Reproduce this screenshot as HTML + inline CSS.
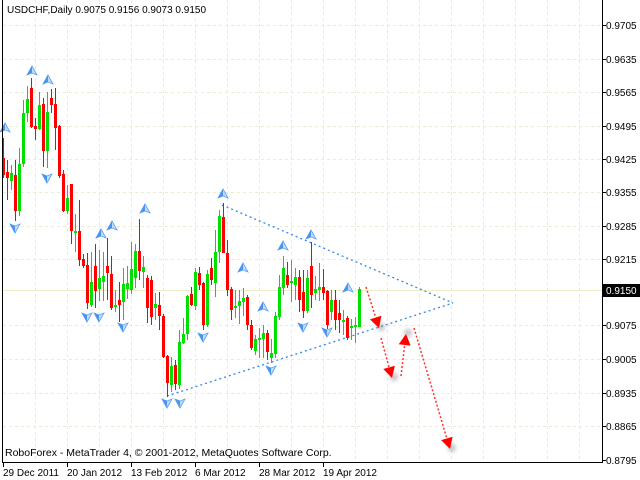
<!DOCTYPE html>
<html><head><meta charset="utf-8"><style>
html,body{margin:0;padding:0;background:#fff;}
svg{display:block;font-family:"Liberation Sans",sans-serif;}
</style></head><body>
<svg id="s" width="640" height="480" xmlns="http://www.w3.org/2000/svg">
<defs><filter id="bl" x="-1" y="-1" width="3" height="3"><feGaussianBlur stdDeviation="2"/></filter></defs>
<rect width="640" height="480" fill="#fff"/>
<g id="grid" stroke="#ebebcf" stroke-width="1" stroke-dasharray="3,3"></g>
<line x1="2" y1="290.5" x2="602" y2="290.5" stroke="#ededc8"/>
<g id="tl" stroke="#3388ee" stroke-width="1.3" stroke-dasharray="2,3" fill="none">
<line x1="222" y1="205" x2="453" y2="303"/>
<line x1="167" y1="396" x2="453" y2="303"/>
</g>
<g id="c"></g>
<g id="ar"></g>
<g id="red"></g>
<line x1="2.5" y1="0" x2="2.5" y2="463" stroke="#000"/>
<line x1="2" y1="462.5" x2="603" y2="462.5" stroke="#000"/>
<line x1="602.5" y1="0" x2="602.5" y2="463" stroke="#000"/>
<g id="ax" font-size="10" fill="#000"></g>
<rect x="603" y="284" width="37" height="13" fill="#000"/>
<text x="606" y="294" font-size="10" fill="#fff">0.9150</text>
<text x="7" y="13" font-size="10" fill="#000">USDCHF,Daily  0.9075 0.9156 0.9073 0.9150</text>
<text x="5" y="456" font-size="10.5" fill="#000">RoboForex - MetaTrader 4, © 2001-2012, MetaQuotes Software Corp.</text>
</svg>
<script>
var NS="http://www.w3.org/2000/svg";
function el(p,t,a,txt){var e=document.createElementNS(NS,t);for(var k in a)e.setAttribute(k,a[k]);if(txt)e.textContent=txt;document.getElementById(p).appendChild(e);return e;}
var ys=[25,59,92,126,159,192,226,259,325,359,393,426];
ys.forEach(function(y){el('grid','line',{x1:3,y1:y+.5,x2:602,y2:y+.5});});
for(var x=35;x<602;x+=32)el('grid','line',{x1:x+.5,y1:0,x2:x+.5,y2:462});
var pl=["0.9705","0.9635","0.9565","0.9495","0.9425","0.9355","0.9285","0.9215","0.9075","0.9005","0.8935","0.8865"];
ys.forEach(function(y,i){el('ax','text',{x:606,y:y+4},pl[i]);el('ax','line',{x1:602,y1:y+.5,x2:606,y2:y+.5,stroke:'#000'});});
el('ax','text',{x:606,y:464},"0.8795");el('ax','line',{x1:602,y1:460.5,x2:606,y2:460.5,stroke:'#000'});
var dl=[[3,"29 Dec 2011"],[67,"20 Jan 2012"],[131,"13 Feb 2012"],[195,"6 Mar 2012"],[259,"28 Mar 2012"],[323,"19 Apr 2012"]];
dl.forEach(function(d){el('ax','text',{x:d[0],y:476},d[1]);el('ax','line',{x1:d[0]+.5,y1:462,x2:d[0]+.5,y2:467,stroke:'#000'});});
var C=[[0,158,175,138,178],[0,172,178,160,200],[1,173,181,165,190],[0,175,211,160,221],[1,164,211,148,216],[1,113,164,100,167],[1,99,113,86,122],[0,88,127,78,128],[0,126,129,118,140],[1,105,129,92,130],[0,104,151,98,167],[1,112,151,92,168],[0,98,105,89,113],[0,104,128,88,150],[0,126,176,125,178],[0,174,211,170,212],[1,198,211,185,214],[0,184,231,184,244],[1,231,232,214,252],[0,231,260,200,266],[0,259,266,254,268],[0,265,303,253,309],[1,282,305,252,307],[0,266,291,244,308],[1,278,289,250,301],[1,276,282,252,301],[0,266,273,238,300],[0,274,308,256,310],[1,305,307,290,312],[0,300,305,282,322],[1,284,302,268,320],[1,283,289,266,299],[1,269,290,242,294],[1,251,278,244,288],[0,251,271,219,280],[1,267,272,256,288],[0,278,308,275,323],[0,280,317,276,325],[1,304,308,293,320],[0,305,316,292,330],[0,316,357,314,358],[0,356,383,355,397],[1,366,385,357,392],[0,365,384,360,390],[1,342,385,330,389],[1,334,343,318,344],[1,296,334,295,340],[0,294,305,287,306],[1,272,306,268,310],[0,273,285,267,290],[0,283,325,282,330],[1,274,325,270,327],[0,268,280,258,285],[1,252,283,230,297],[1,216,252,210,263],[0,217,253,203,253],[0,253,290,240,296],[0,289,310,287,320],[1,306,308,290,318],[1,301,306,290,324],[1,298,302,288,316],[0,297,325,295,330],[0,325,348,320,350],[1,339,351,335,355],[1,338,340,328,358],[1,333,339,325,358],[0,333,352,330,360],[1,353,358,339,363],[1,316,354,312,358],[1,287,317,275,320],[1,268,288,256,295],[0,275,285,262,288],[1,281,283,260,302],[1,277,285,268,300],[0,277,300,270,312],[0,292,311,270,318],[1,278,311,270,313],[0,266,295,242,308],[1,289,293,276,300],[1,287,290,263,301],[0,287,293,269,300],[0,291,325,290,329],[1,300,312,290,320],[0,300,320,290,330],[0,313,320,300,333],[1,320,322,310,335],[0,318,338,316,340],[1,326,328,319,340],[1,325,327,317,343],[1,289,327,287,327]];
C.forEach(function(c,i){var x=3+4*i;var col=c[0]?'#00e000':'#ff0000';
el('c','rect',{x:x,y:c[3],width:1,height:c[4]-c[3],fill:col});
el('c','rect',{x:x-1,y:c[1],width:3,height:Math.max(2,c[2]-c[1]),fill:col});});
var up=[[32,71],[48,80],[5,128],[101,234],[112,226],[145,209],[223,194],[243,268],[263,307],[283,246],[311,235],[348,288]];
var dn=[[15,228],[47,178],[87,317],[99,317],[123,327],[203,337],[271,370],[303,327],[327,332],[167,403],[180,403]];
function arr(x,y,s){el('ar','path',{d:"M"+x+" "+(y-5*s)+" L"+(x+5)+" "+(y+4*s)+" L"+x+" "+(y+2*s)+" L"+(x-5)+" "+(y+4*s)+"Z",fill:'#bfdcff',stroke:'#5aa0f0','stroke-width':0.8});
el('ar','path',{d:"M"+x+" "+(y-5*s)+" L"+x+" "+(y+2*s)+" L"+(x-5)+" "+(y+4*s)+"Z",fill:'#4a94f0'});}
up.forEach(function(p){arr(p[0],p[1],1);});
dn.forEach(function(p){arr(p[0],p[1],-1);});
function ra(x1,y1,x2,y2){var dx=x2-x1,dy=y2-y1,L=Math.sqrt(dx*dx+dy*dy),ux=dx/L,uy=dy/L;
var bx=x2-ux*11,by=y2-uy*11;
el('red','circle',{cx:x2+2,cy:y2-1,r:4,fill:'#888',opacity:0.5,filter:'url(#bl)'});
el('red','line',{x1:x1,y1:y1,x2:bx,y2:by,stroke:'#ff3030','stroke-width':1.5,'stroke-dasharray':'2,2'});
el('red','path',{d:"M"+x2+" "+y2+" L"+(bx-uy*6)+" "+(by+ux*6)+" L"+(bx+uy*6)+" "+(by-ux*6)+"Z",fill:'#ff0000'});}
ra(366,287,379,328);ra(381,338,392,378);ra(401,376,406,334);ra(414,328,450,449);
</script>
</body></html>
